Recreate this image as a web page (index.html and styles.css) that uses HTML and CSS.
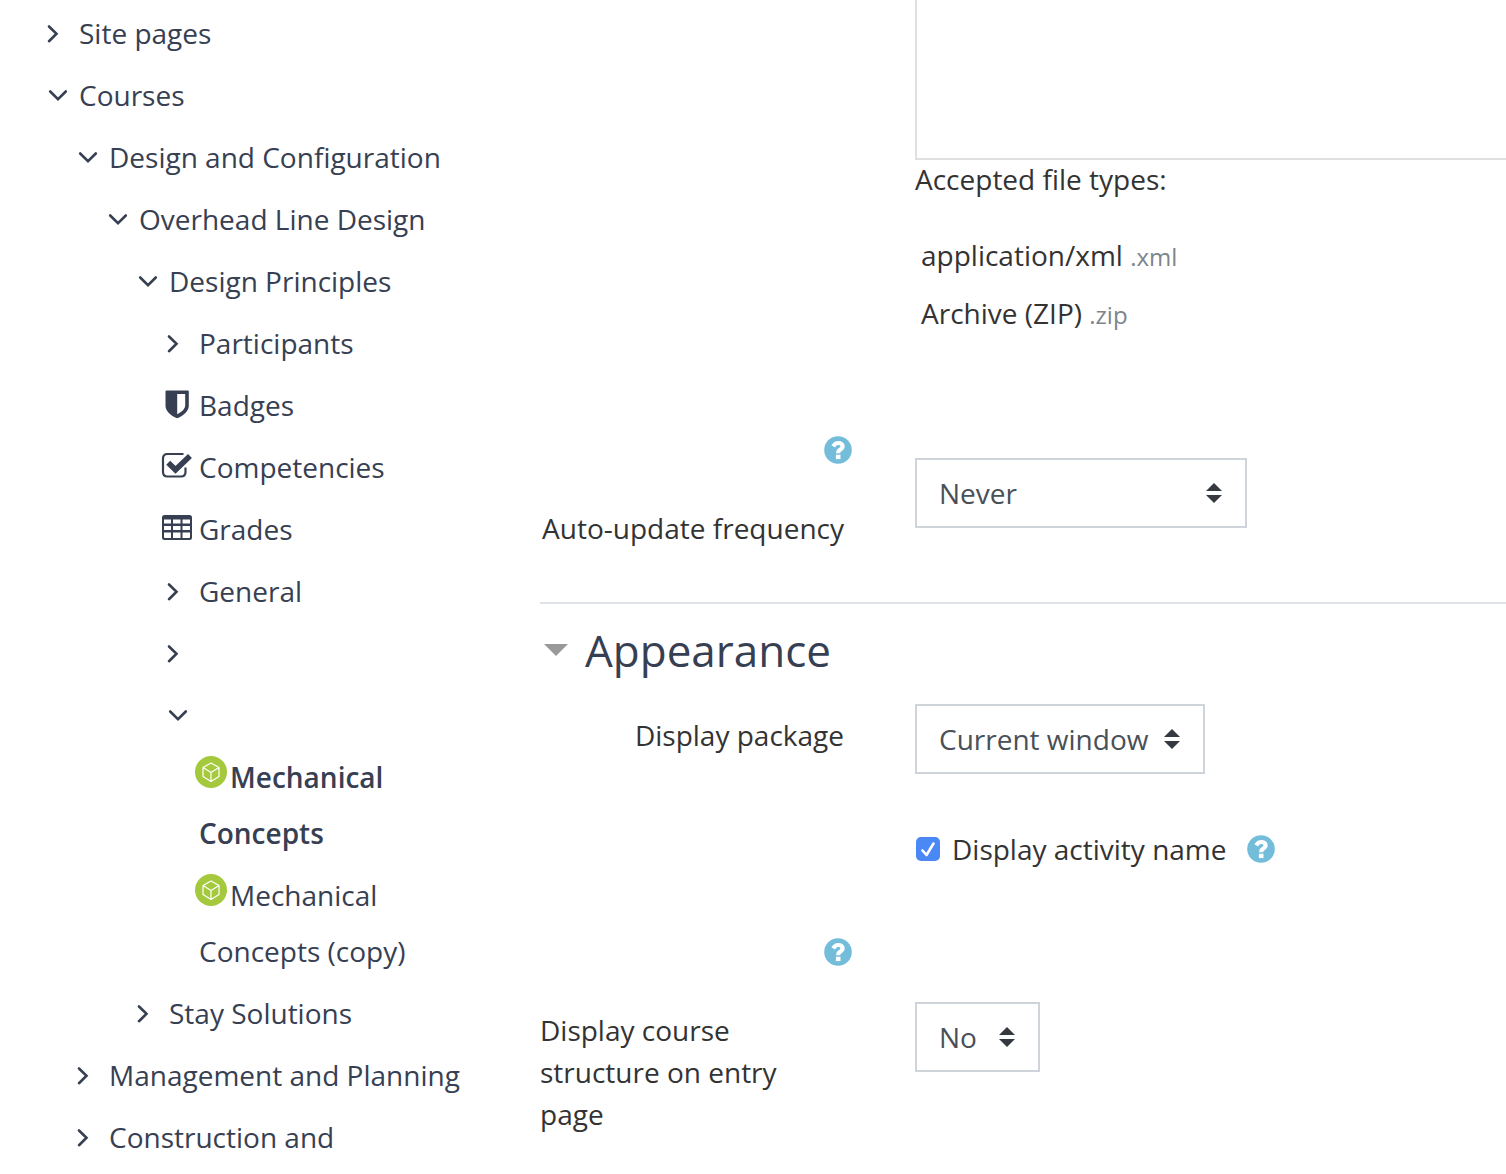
FILE: index.html
```html
<!DOCTYPE html>
<html lang="en">
<head>
  <meta charset="UTF-8">
  <meta name="viewport" content="width=device-width, initial-scale=1.0">
  <title>SCORM package settings</title>
  <link rel="stylesheet" href="styles.css">
</head>
<body>
  <!-- Shared icons -->
  <svg class="sprite" aria-hidden="true">
    <symbol id="right" viewBox="0 0 38 32">
      <path d="M8 9.5l7.500 7.300L8 24.200" fill="none" stroke="currentColor" stroke-width="2.600" stroke-linecap="round"/>
    </symbol>
    <symbol id="down" viewBox="0 0 38 32">
      <path d="M9.200 12.500l7.800 7.600 7.800-7.600" fill="none" stroke="currentColor" stroke-width="2.600" stroke-linecap="round"/>
    </symbol>
    <symbol id="shield" viewBox="0 0 38 32">
      <path fill="currentColor" fill-rule="evenodd" d="M5.500 1.500h21.300q1 0 1 1v14.200c0 5.400-5 9.800-11.600 12.600C9.500 26.500 4.500 22.100 4.500 16.700V2.500q0-1 1-1zM16.200 5v20.300c4.800-2.500 8-5.400 8-9V5z"/>
    </symbol>
    <symbol id="check" viewBox="0 0 38 32">
      <path d="M22.500 3H6.500Q2 3 2 7.500V21q0 4.500 4.500 4.500H20q4.500 0 4.500-4.500v-4.500" fill="none" stroke="currentColor" stroke-width="2.200"/>
      <path d="M7.200 11.800l7.300 7L29 5" fill="none" stroke="currentColor" stroke-width="5.600"/>
    </symbol>
    <symbol id="table" viewBox="0 0 38 32">
      <path fill="currentColor" fill-rule="evenodd" d="M3.500 2h25q2.500 0 2.500 2.500V24.500q0 2.500-2.500 2.500h-25Q1 27 1 24.500V4.500Q1 2 3.500 2zM3 6.500v4h7v-4zM12 6.500v4h7.500v-4zM21.500 6.500v4H29v-4zM3 13v4h7v-4zM12 13v4h7.500v-4zM21.500 13v4H29v-4zM3 19.500V24q0 1 1 1h6v-5.500zM12 19.500V25h7.500v-5.500zM21.500 19.500V25H28q1 0 1-1v-4.500z"/>
    </symbol>
    <symbol id="box" viewBox="0 0 32 32">
      <circle cx="16" cy="16" r="16" fill="#a4c93c"/>
      <path d="M16 7l8 4.600v9L16 25.500l-8-4.900v-9zM8 11.600l8 4.900 8-4.900M16 16.500v9" fill="none" stroke="#fff" stroke-width="1.200" stroke-linejoin="round"/>
    </symbol>
    <symbol id="help" viewBox="0 0 28 28">
      <circle cx="14" cy="14" r="13.800" fill="#73bddb"/>
      <path d="M9.200 10.300C10.600 8 12 7 14.200 7c2.700 0 4.400 1.400 4.400 3.300 0 2-1.300 2.700-2.600 3.500-1.200.8-1.800 1.400-1.800 2.600v.9" fill="none" stroke="#fff" stroke-width="4.200"/>
      <path d="M11.900 18.700h4.600v4.400h-4.600z" fill="#fff"/>
    </symbol>
  </svg>

  <div class="page">
    <nav class="sidebar" aria-label="Navigation">
      <ul class="tree">
        <li><a href="#"><svg class="icon"><use href="#right"/></svg>Site pages</a></li>
        <li>
          <a href="#"><svg class="icon"><use href="#down"/></svg>Courses</a>
          <ul>
            <li>
              <a href="#"><svg class="icon"><use href="#down"/></svg>Design and Configuration</a>
              <ul>
                <li>
                  <a href="#"><svg class="icon"><use href="#down"/></svg>Overhead Line Design</a>
                  <ul>
                    <li>
                      <a href="#"><svg class="icon"><use href="#down"/></svg>Design Principles</a>
                      <ul>
                        <li><a href="#"><svg class="icon"><use href="#right"/></svg>Participants</a></li>
                        <li><a href="#"><svg class="icon"><use href="#shield"/></svg>Badges</a></li>
                        <li><a href="#"><svg class="icon"><use href="#check"/></svg>Competencies</a></li>
                        <li><a href="#"><svg class="icon"><use href="#table"/></svg>Grades</a></li>
                        <li><a href="#"><svg class="icon"><use href="#right"/></svg>General</a></li>
                        <li><a href="#" aria-label="Expand section"><svg class="icon"><use href="#right"/></svg></a></li>
                        <li>
                          <a href="#" aria-label="Collapse section"><svg class="icon"><use href="#down"/></svg></a>
                          <div class="activities">
                            <a class="activity active" href="#"><svg class="activity-icon"><use href="#box"/></svg>Mechanical Concepts</a>
                            <a class="activity" href="#"><svg class="activity-icon"><use href="#box"/></svg>Mechanical Concepts (copy)</a>
                          </div>
                        </li>
                      </ul>
                    </li>
                    <li><a href="#"><svg class="icon"><use href="#right"/></svg>Stay Solutions</a></li>
                  </ul>
                </li>
              </ul>
            </li>
            <li><a href="#"><svg class="icon"><use href="#right"/></svg>Management and Planning</a></li>
            <li><a href="#"><svg class="icon"><use href="#right"/></svg>Construction and</a></li>
          </ul>
        </li>
      </ul>
    </nav>

    <main class="content">
      <form>
        <div class="form-row package">
          <div class="field">
            <div class="dropzone"></div>
            <p class="accepted">Accepted file types:</p>
            <ul class="filetypes">
              <li>application/xml <small>.xml</small></li>
              <li>Archive (ZIP) <small>.zip</small></li>
            </ul>
          </div>
        </div>

        <div class="form-row update">
          <div class="form-label">
            <button type="button" class="help" aria-label="Help with auto-update frequency"><svg><use href="#help"/></svg></button>
            <label for="update">Auto-update frequency</label>
          </div>
          <div class="field">
            <select id="update">
              <option>Never</option>
              <option>Every day</option>
              <option>Every time it's used</option>
            </select>
          </div>
        </div>

        <section class="appearance">
          <h3><button type="button" class="toggle"><span class="caret"></span>Appearance</button></h3>

          <div class="form-row top">
            <div class="form-label">
              <label for="display">Display package</label>
            </div>
            <div class="field">
              <select id="display">
                <option>Current window</option>
                <option>New window</option>
              </select>
            </div>
          </div>

          <div class="form-row check-row">
            <div class="field check">
              <input type="checkbox" id="activityname" checked>
              <label for="activityname">Display activity name</label>
              <button type="button" class="help" aria-label="Help with display activity name"><svg><use href="#help"/></svg></button>
            </div>
          </div>

          <div class="form-row">
            <div class="form-label">
              <button type="button" class="help" aria-label="Help with display course structure"><svg><use href="#help"/></svg></button>
              <label for="structure">Display course structure on entry page</label>
            </div>
            <div class="field">
              <select id="structure">
                <option>No</option>
                <option>Yes</option>
              </select>
            </div>
          </div>
        </section>
      </form>
    </main>
  </div>
</body>
</html>
```
FILE: styles.css
```css
* {
  margin: 0;
  padding: 0;
  box-sizing: border-box;
}

body {
  font-family: "Open Sans", sans-serif;
  font-size: 28px;
  line-height: 42px;
  color: #333;
  background-color: #fff;
}

ul {
  list-style: none;
}

button {
  font: inherit;
  color: inherit;
  background: none;
  border: none;
  cursor: pointer;
}

.sprite {
  display: none;
}

.page {
  display: grid;
  grid-template-columns: 480px 1fr;
  column-gap: 60px;
}

/* Navigation tree */
.sidebar {
  padding: 2px 8px 0 41px;
  color: #374052;
}

.tree ul {
  padding-left: 30px;
}

.tree a {
  display: flex;
  align-items: center;
  min-height: 62px;
  padding: 3px 0;
  line-height: 56px;
  color: inherit;
  text-decoration: none;
}

.tree a:hover {
  text-decoration: underline;
}

.icon {
  width: 38px;
  height: 32px;
  flex-shrink: 0;
}

.activities {
  padding-left: 38px;
}

.tree .activity {
  display: block;
}

.activity.active {
  font-weight: 600;
}

.activity-icon {
  width: 32px;
  height: 32px;
  margin: 0 3px 0 -4px;
  vertical-align: baseline;
}

/* Form */
.form-row {
  display: grid;
  grid-template-columns: 312px 1fr;
  column-gap: 63px;
  align-items: center;
}

.form-row.top {
  align-items: start;
}

.form-label {
  display: flex;
  flex-direction: column;
  align-items: flex-end;
  gap: 43px;
}

.form-label label {
  max-width: 312px;
  padding-right: 8px;
}

.top .form-label {
  padding-top: 10px;
}

.field {
  grid-column: 2;
}

.dropzone {
  height: 160px;
  border: 2px solid #dee0e2;
  border-width: 0 0 2px 2px;
}

.accepted {
  line-height: 38px;
}

.filetypes {
  padding: 28px 0 0 6px;
  line-height: 58px;
}

.filetypes small {
  font-size: 24px;
  line-height: 1;
  color: #7d858d;
}

.update {
  margin-top: 94px;
  margin-bottom: 53px;
}

.help {
  width: 28px;
  height: 28px;
}

.help svg {
  display: block;
  width: 28px;
  height: 28px;
}

select {
  display: block;
  height: 70px;
  padding: 0 54px 0 22px;
  font: inherit;
  color: #495057;
  border: 2px solid #ced4da;
  border-radius: 0;
  appearance: none;
  background: #fff url("data:image/svg+xml,%3Csvg xmlns='http://www.w3.org/2000/svg' viewBox='0 0 4 5'%3E%3Cpath fill='%23343a40' d='M2 0L0 2h4zm0 5L0 3h4z'/%3E%3C/svg%3E") no-repeat right 23px center / 16px 20px;
}

.appearance {
  padding-top: 16px;
  border-top: 2px solid #dee2e6;
}

.appearance h3 {
  margin-bottom: 24px;
  font-size: 44px;
  font-weight: 400;
  line-height: 60px;
  color: #374052;
}

.toggle {
  display: flex;
  align-items: center;
  gap: 17px;
  padding-left: 4px;
}

.caret {
  border: 12px solid transparent;
  border-top-color: #999;
  border-bottom: none;
}

.check-row {
  margin: 54px 0 68px;
}

.check {
  display: flex;
  align-items: center;
}

.check input {
  width: 24px;
  height: 24px;
  margin: 0 12px 0 1px;
  border-radius: 5px;
  appearance: none;
  background: #4a88f5 url("data:image/svg+xml,%3Csvg xmlns='http://www.w3.org/2000/svg' viewBox='0 0 24 24'%3E%3Cpath fill='none' stroke='%23fff' stroke-width='2.6' stroke-linecap='round' stroke-linejoin='round' d='M6.500 13.500l4 4.500 7-11.500'/%3E%3C/svg%3E") center / 24px 24px;
}

.check .help {
  margin-left: 20px;
}
```
